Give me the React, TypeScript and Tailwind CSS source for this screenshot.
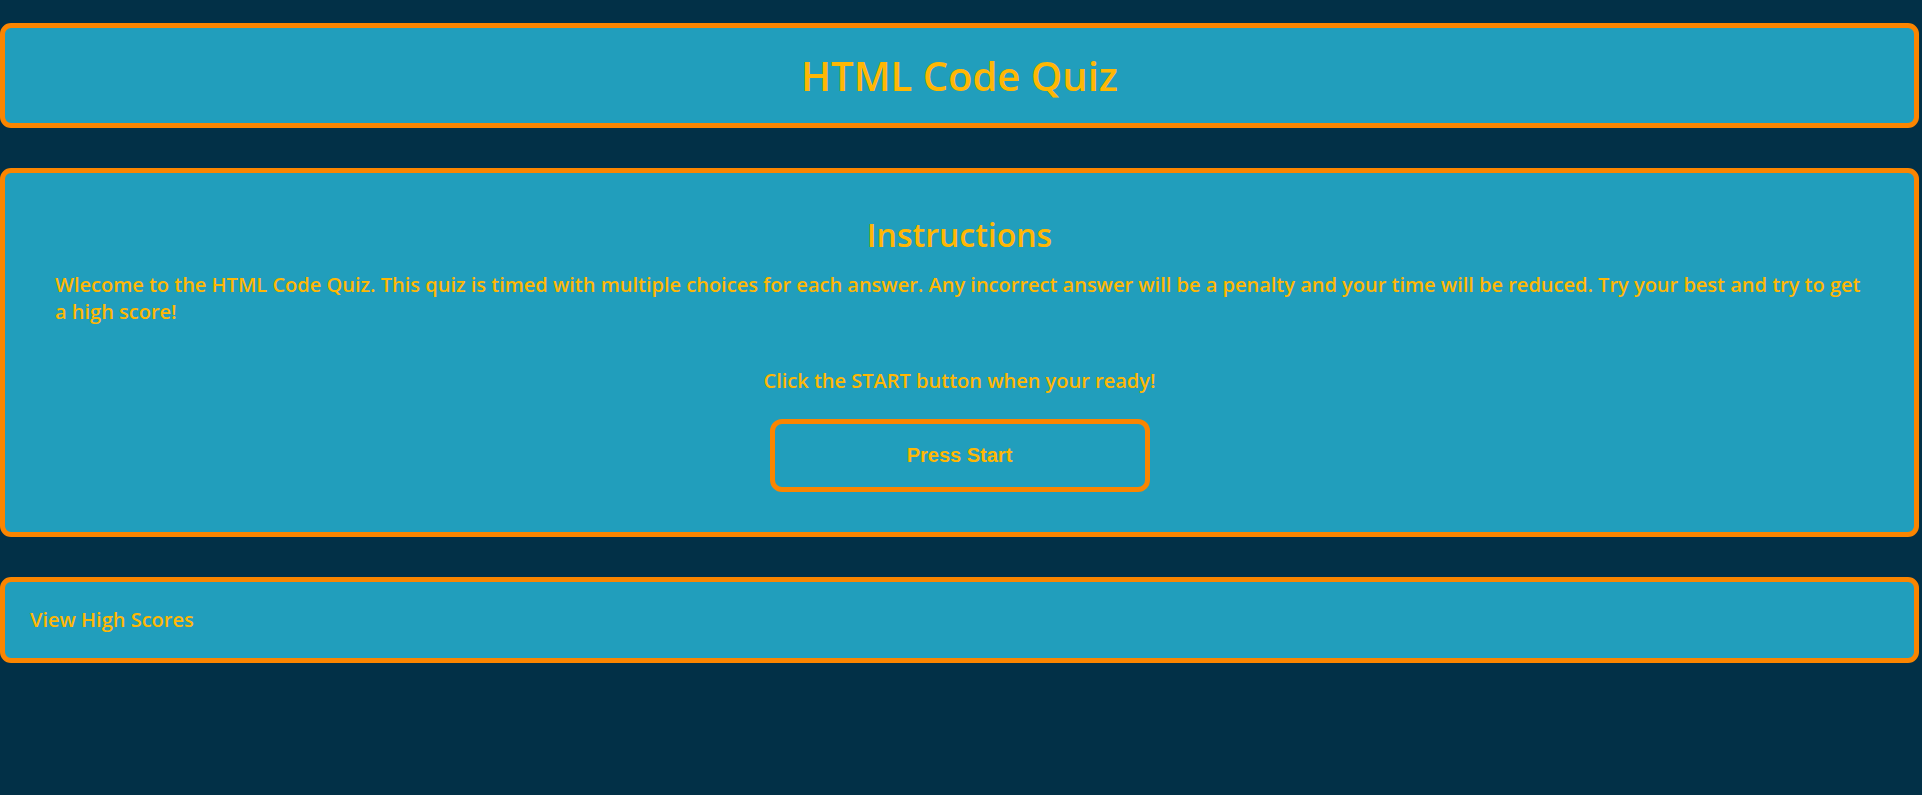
export default function App() {
  const box =
    "mr-[3px] rounded-[11px] border-[5px] border-[#fb8500] bg-[#219ebc] text-[#ffb703]";

  return (
    <div className="min-h-[795px] bg-[#023047] pt-[23px] font-['Open_Sans',sans-serif]">
      <header className={`${box} flex h-[105px] items-center justify-center`}>
        <h1 className="text-[40px] font-semibold">HTML Code Quiz</h1>
      </header>

      <section className={`${box} mt-[40px] flex h-[369px] flex-col items-center px-[50px] pt-[40px]`}>
        <h2 className="text-[32px] font-semibold leading-[44px]">Instructions</h2>
        <p className="mt-[14px] w-full text-[20px] font-semibold leading-[27px]">
          Wlecome to the HTML Code Quiz. This quiz is timed with multiple choices for each answer. Any incorrect
          answer will be a penalty and your time will be reduced. Try your best and try to get a high score!
        </p>
        <p className="mt-[42px] text-[20px] font-semibold leading-[27px]">
          Click the START button when your ready!
        </p>
        <button
          type="button"
          className="mt-[25px] h-[73px] w-[380px] cursor-pointer rounded-[12px] border-[5px] border-[#fb8500] pb-[2px] font-['Liberation_Sans',Arial,sans-serif] text-[20px] font-bold text-[#ffb703]"
        >
          Press Start
        </button>
      </section>

      <nav className={`${box} mt-[40px] flex h-[86px] items-center px-[25px]`}>
        <a href="#" className="text-[20px] font-semibold">
          View High Scores
        </a>
      </nav>
    </div>
  );
}
